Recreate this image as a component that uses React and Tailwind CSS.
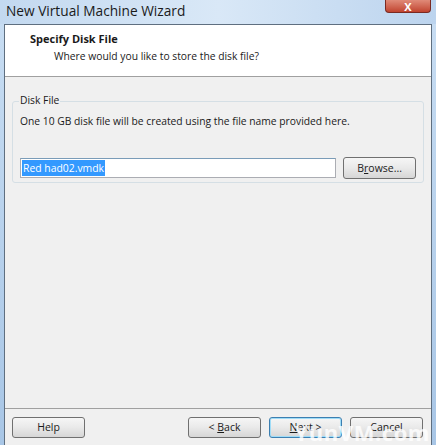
import React from "react";

function Btn({ children, className = "", focused = false }) {
  return (
    <div
      className={
        "h-[21px] w-[73px] rounded-[3px] border flex items-center justify-center text-[10.5px] text-[#1b1b1b] bg-gradient-to-b from-[#f6f6f6] via-[#e9e9e9] to-[#d6d6d6] " +
        (focused ? "border-[#3c7fb1] shadow-[inset_0_0_0_1px_#9fdcf7]" : "border-[#707070]") +
        " " +
        className
      }
    >
      {children}
    </div>
  );
}

export default function App() {
  return (
    <div
      className="relative w-[436px] h-[445px] overflow-hidden bg-gradient-to-b from-[#c9def3] to-[#a8c6e6]"
      style={{ fontFamily: '"Open Sans", "Noto Sans", Arial, sans-serif' }}
    >
      {/* title bar */}
      <div className="h-[24px] flex items-start justify-between bg-gradient-to-r from-[#c3d9f0] via-[#d9e8f7] to-[#bcd4ee]">
        <span className="pl-[6px] pt-[1px] text-[13.7px] text-[#1a1a1a]">New Virtual Machine Wizard</span>
        <div className="mr-[5px] w-[46px] h-[13px] rounded-b-[4px] border border-t-0 border-[#7a2a22] bg-gradient-to-b from-[#e08a78] to-[#c0432f] flex items-center justify-center text-white text-[11px] font-bold leading-none">
          X
        </div>
      </div>

      <div className="absolute left-[4px] top-[24px] w-[428px] bottom-0 border-l border-t border-r border-[#5f6f80] bg-[#f0f0f0] flex flex-col">
        {/* header */}
        <div className="h-[52px] bg-white border-b border-[#a0a0a0] pl-[25px] pt-[6px]">
          <div className="text-[11px] font-bold text-[#1a1a1a] leading-[16px]">Specify Disk File</div>
          <div className="text-[10.3px] text-[#1a1a1a] leading-[16px] pl-[24px] pt-[1px]">Where would you like to store the disk file?</div>
        </div>

        {/* body */}
        <div className="flex-1 px-[7px] pt-[24px]">
          <div className="relative h-[82px] border border-[#d5dfe5] rounded-[3px] px-[7px] pt-[12px]">
            <span className="absolute left-[6px] top-[-9px] px-[1px] bg-[#f0f0f0] text-[10.3px] text-[#1a1a1a]">Disk File</span>
            <div className="text-[10.3px] text-[#1a1a1a]">One 10 GB disk file will be created using the file name provided here.</div>
            <div className="flex items-center mt-[28px] gap-[7px]">
              <div className="w-[317px] h-[20px] bg-white border border-[#abadb3] border-t-[#7a9cb8] flex items-center pl-[1px]">
                <span className="bg-[#3399ff] text-white text-[10.4px] leading-[16px] px-[1px]">Red had02.vmdk</span>
              </div>
              <Btn className="h-[22px]">
                <span>
                  B<u>r</u>owse...
                </span>
              </Btn>
            </div>
          </div>
        </div>

        {/* footer */}
        <div className="h-[37px] border-t border-[#a0a0a0] flex items-start pt-[8px] pl-[7px] pr-[8px]">
          <Btn>Help</Btn>
          <div className="flex-1" />
          <div className="flex gap-[8px]">
            <Btn>
              <span>
                &lt; <u>B</u>ack
              </span>
            </Btn>
            <Btn focused>
              <span>
                <u>N</u>ext &gt;
              </span>
            </Btn>
            <Btn>Cancel</Btn>
          </div>
        </div>
      </div>

      {/* watermark */}
      <div className="absolute right-[6px] bottom-[-4px] text-[22px] font-bold text-white/80 tracking-wide">
        YunVM.com
      </div>
    </div>
  );
}
